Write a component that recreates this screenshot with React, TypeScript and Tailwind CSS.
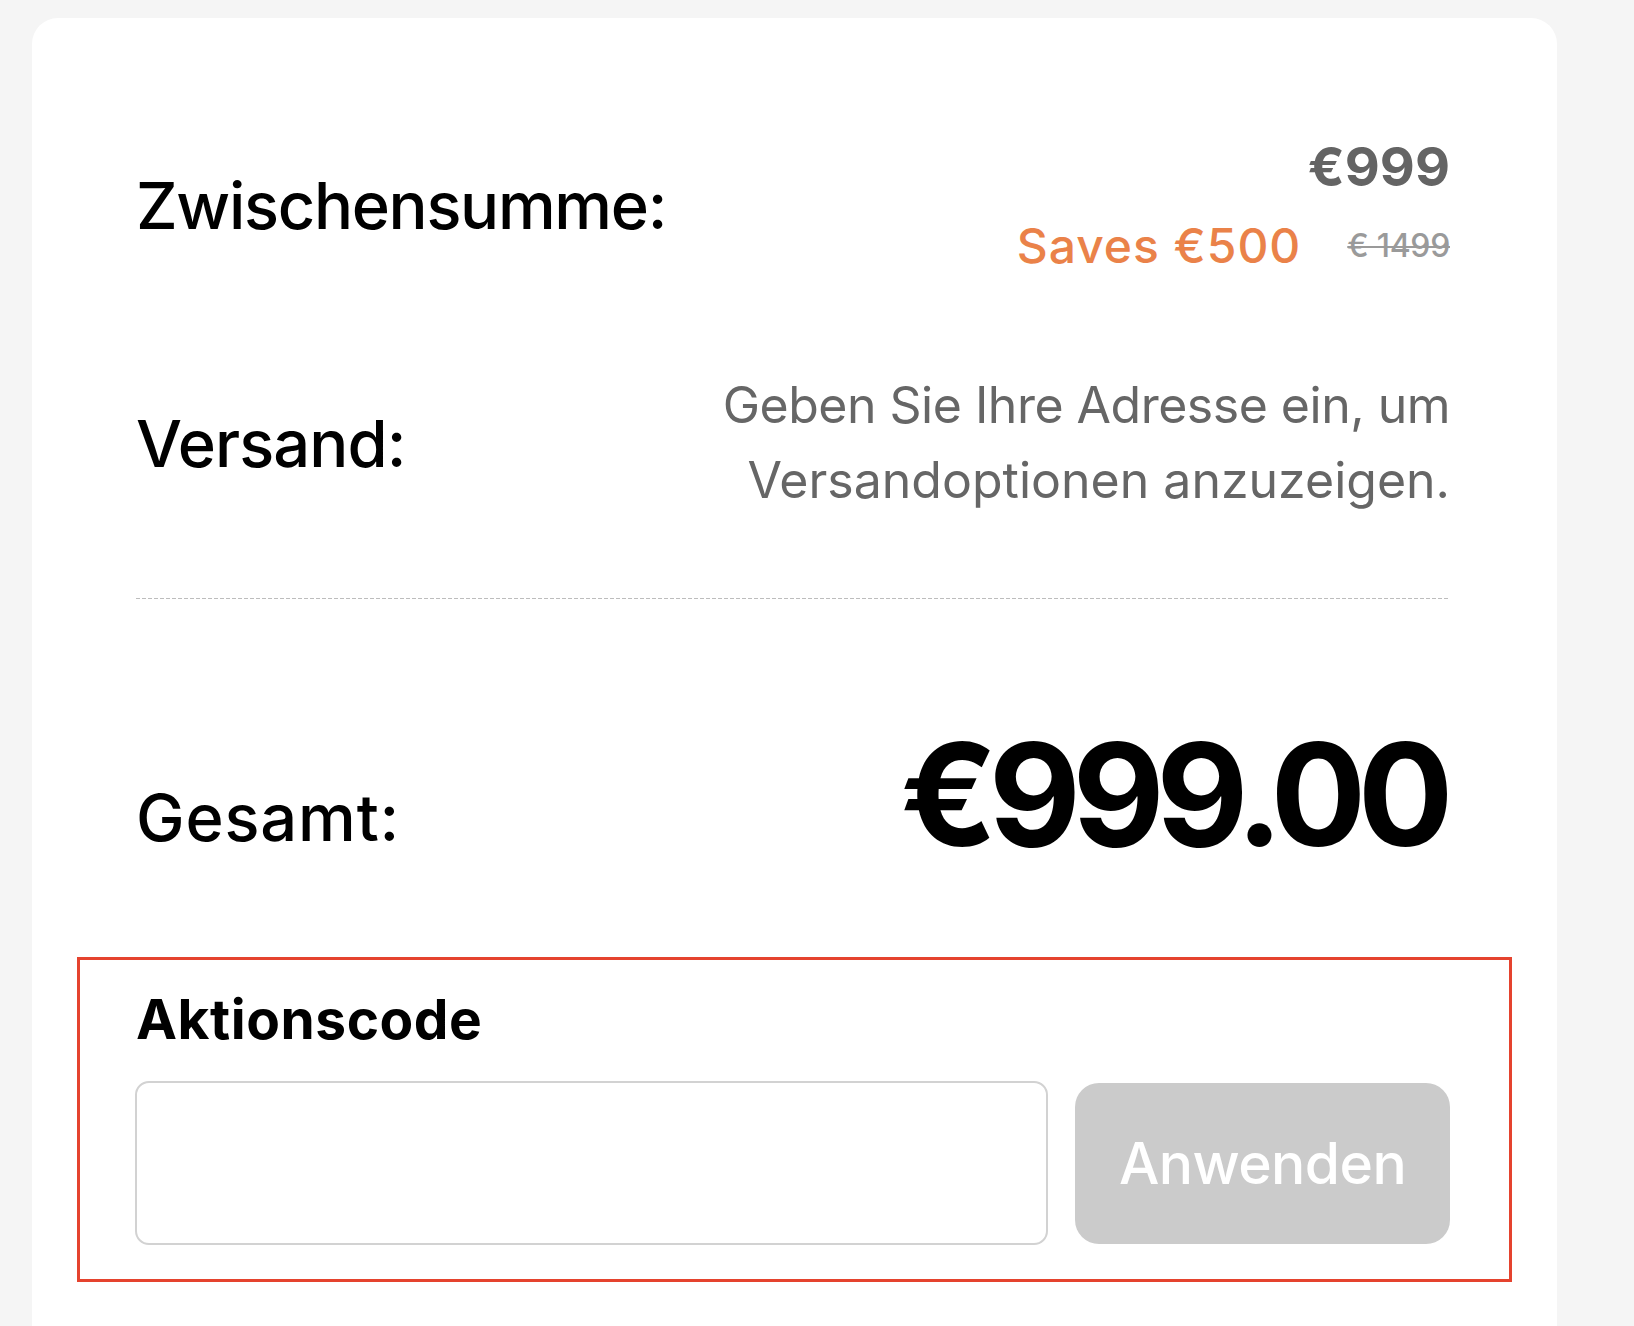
import React from "react";

export default function App() {
  return (
    <div
      className="min-h-screen w-full bg-[#f5f5f5] pt-[18px] pb-[40px]"
      style={{ fontFamily: "Inter, 'Noto Sans', sans-serif" }}
    >
      <div className="ml-[32px] w-[1525px] rounded-[26px] bg-white pt-[122px] pb-[80px] pl-[104px] pr-[107px]">
        {/* Row 1: Zwischensumme */}
        <div className="flex items-center justify-between">
          <div className="text-[65px] leading-none font-medium tracking-[-0.02em] text-black">
            Zwischensumme:
          </div>
          <div className="flex flex-col items-end">
            <div className="text-[54px] leading-none font-bold text-[#646464]">
              €999
            </div>
            <div className="mt-[28px] flex items-center gap-[46px]">
              <span className="text-[48px] leading-none font-medium tracking-[0.02em] text-[#ea8249]">
                Saves €500
              </span>
              <span className="text-[32px] leading-none font-medium tracking-[-0.01em] text-[#9a9a9a] line-through decoration-[2px]">
                € 1499
              </span>
            </div>
          </div>
        </div>

        {/* Row 2: Versand */}
        <div className="mt-[98px] flex items-center justify-between">
          <div className="text-[65px] leading-none font-medium tracking-[-0.014em] text-black">
            Versand:
          </div>
          <div className="text-right text-[50px] leading-[75px] font-normal text-[#666666]">
            <div className="tracking-[-0.01em]">Geben Sie Ihre Adresse ein, um</div>
            <div>Versandoptionen anzuzeigen.</div>
          </div>
        </div>

        {/* Divider */}
        <div className="mt-[80px] h-px w-full bg-[linear-gradient(to_right,#bdbdbd_60%,transparent_60%)] bg-[length:6px_1px] bg-repeat-x" />

        {/* Row 3: Gesamt */}
        <div className="mt-[124px] flex items-end justify-between">
          <div className="mb-[15px] text-[65px] leading-none font-medium tracking-[0.013em] text-black">
            Gesamt:
          </div>
          <div className="mr-[5px] text-[142px] leading-none font-bold tracking-[-0.06em] text-black">
            €999.00
          </div>
        </div>

        {/* Promo code box */}
        <div className="mt-[92px] -ml-[59px] -mr-[62px] border-[3px] border-[#e5432e] pt-[32px] pb-[34px] pl-[56px] pr-[59px]">
          <div className="text-[55px] leading-none font-bold tracking-[0.01em] text-black">
            Aktionscode
          </div>
          <div className="mt-[34px] flex items-center gap-[27px]">
            <div className="ml-[-1px] h-[164px] flex-1 rounded-[14px] border-2 border-[#d2d2d2] bg-white" />
            <button className="flex h-[161px] w-[375px] items-center justify-center rounded-[24px] bg-[#cbcbcb] text-[57px] leading-none font-medium tracking-[-0.01em] text-white">
              Anwenden
            </button>
          </div>
        </div>
      </div>
    </div>
  );
}
